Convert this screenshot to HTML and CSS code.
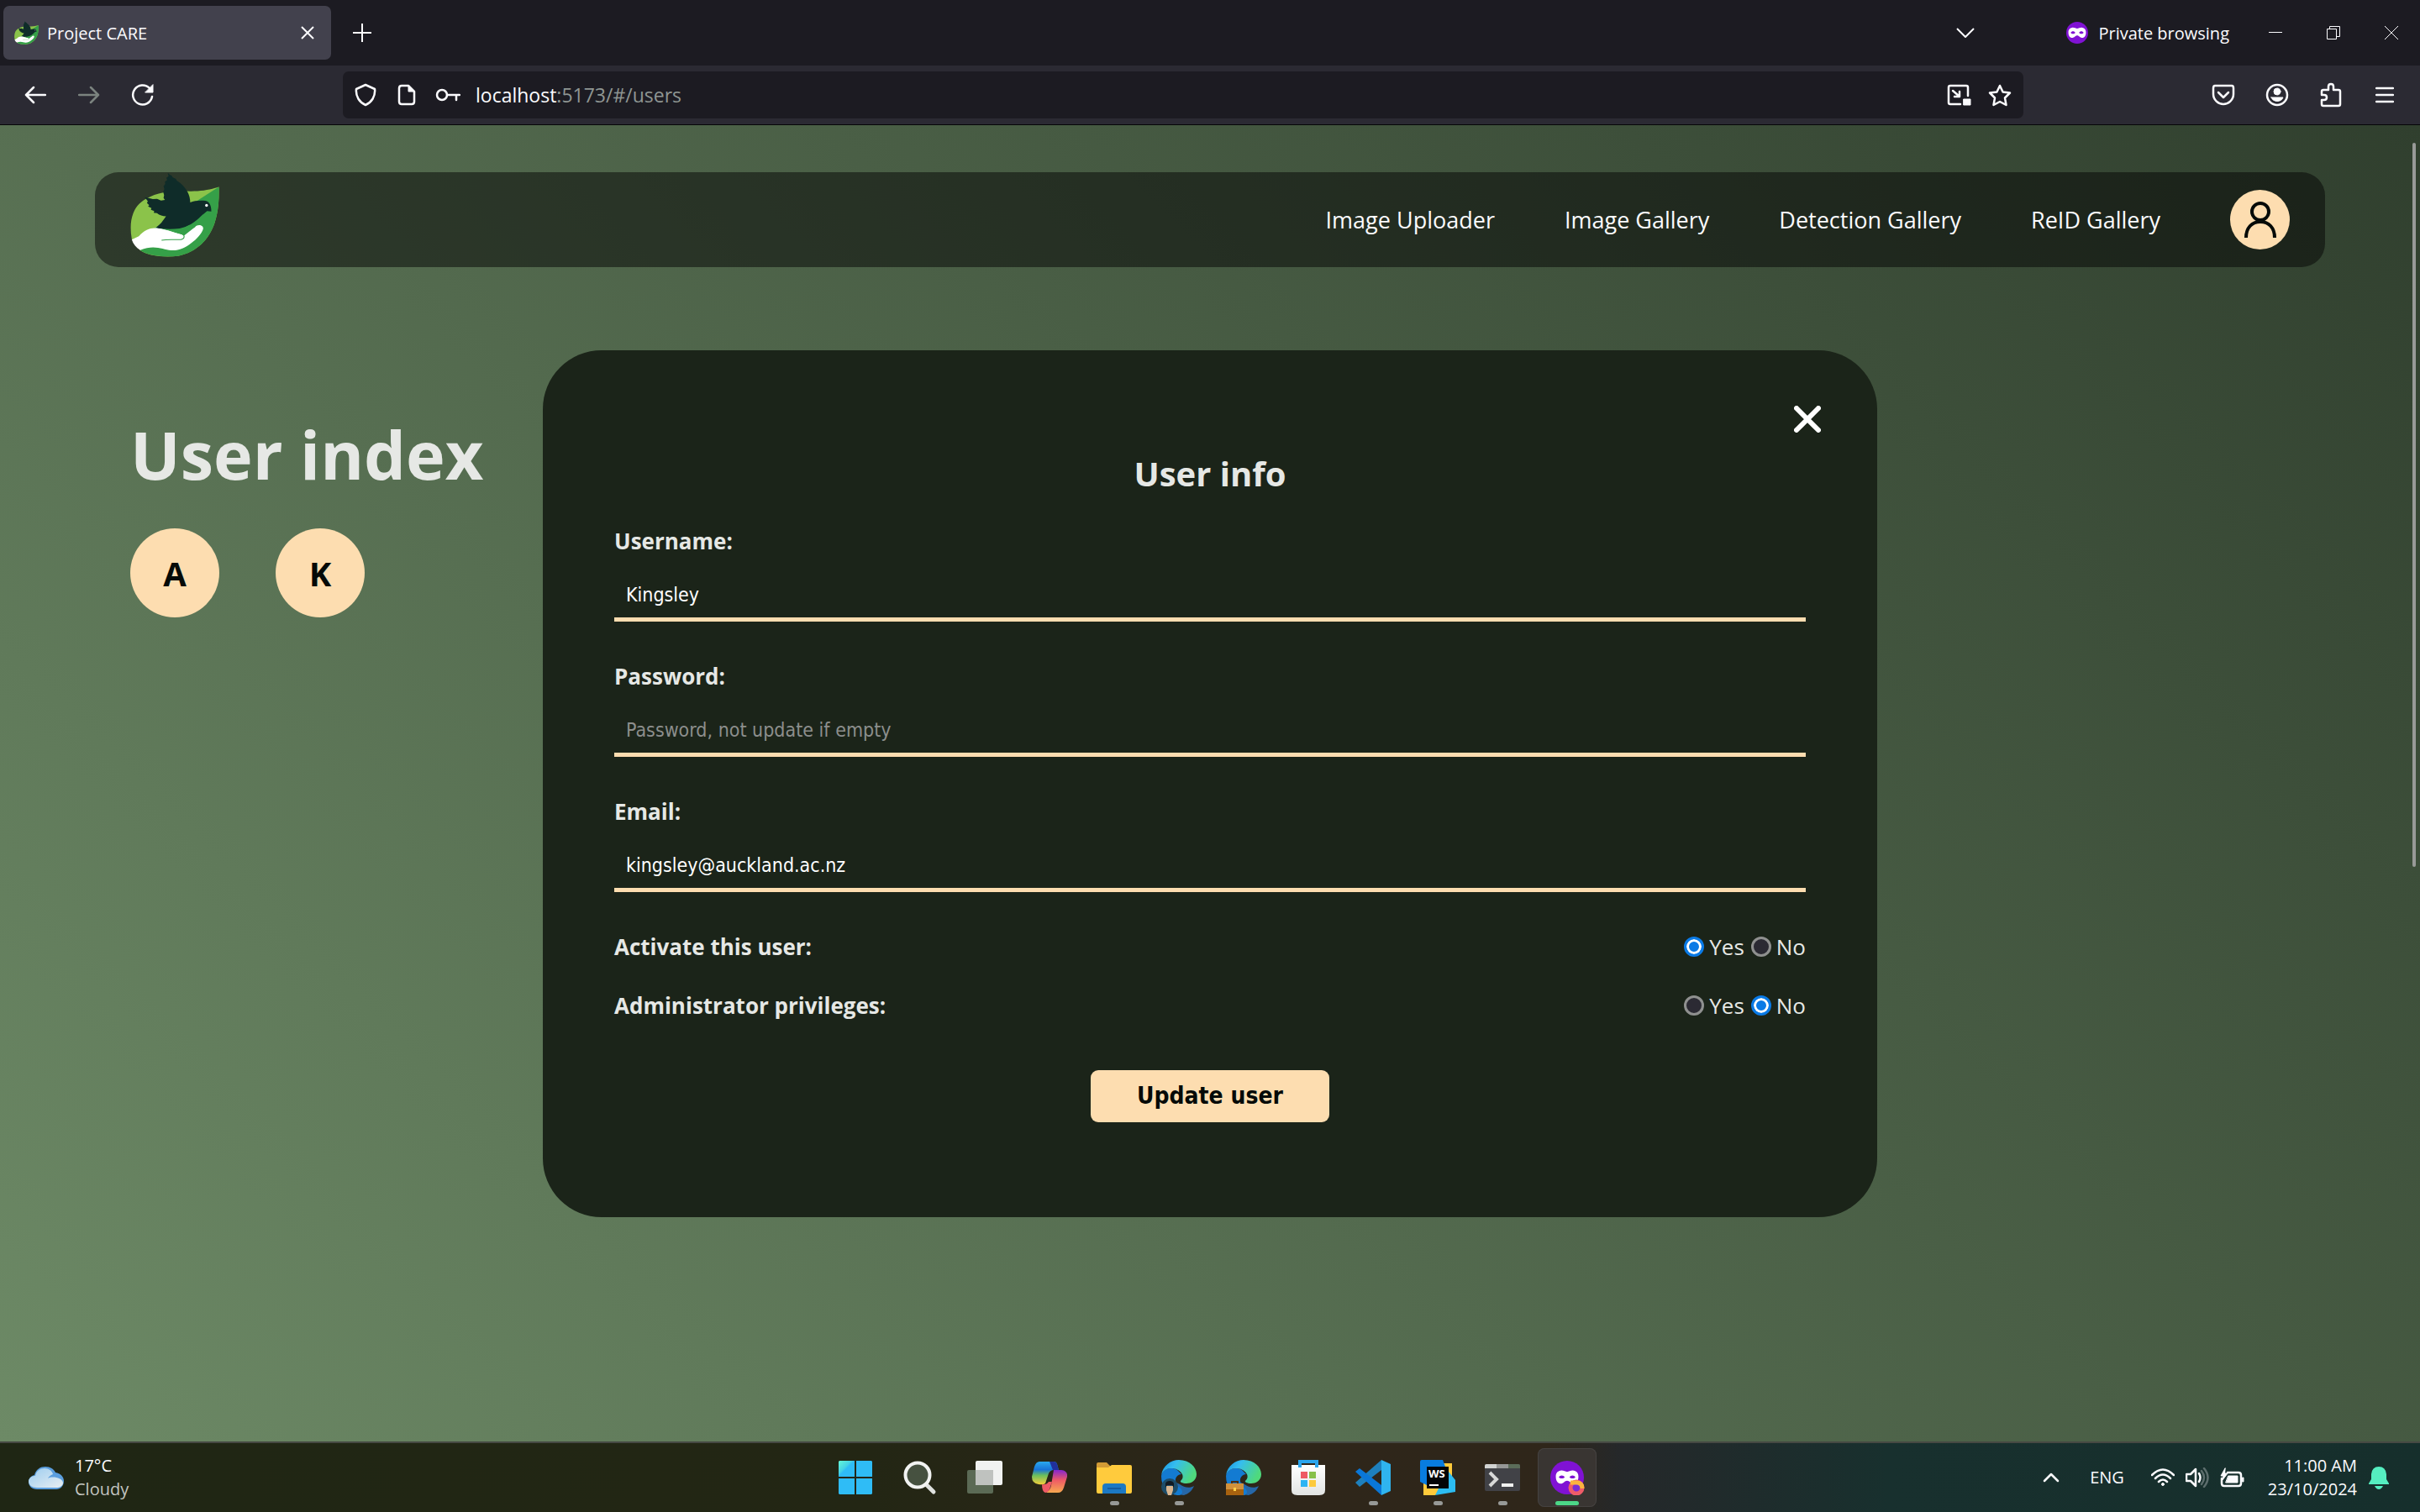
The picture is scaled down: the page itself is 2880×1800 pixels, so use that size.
FILE: index.html
```html
<!DOCTYPE html>
<html lang="en">
<head>
<meta charset="utf-8">
<meta name="viewport" content="width=device-width, initial-scale=1">
<title>Project CARE</title>
<link rel="stylesheet" href="styles.css">
</head>
<body>
<svg class="defs" aria-hidden="true">
  <defs>
    <symbol id="care-logo" viewBox="45 30 316 302">
      <path fill="#8bc34a" d="M50 268C38 200 55 150 100 125 150 97 200 96 260 98 300 98 330 92 360 82 361 130 358 170 345 210 325 270 280 315 215 328 160 335 100 325 80 308Z"/>
      <path fill="#35a048" d="M360 82 130 230 80 308C110 328 160 333 215 328 280 315 325 270 345 210 358 170 361 130 360 82Z"/>
      <path fill="#0f2c29" d="M178 32 186 40 192 42 195 48 207 54 210 60 222 68C245 88 258 110 258 138 272 131 295 130 312 132 326 135 333 148 333 170L318 168C310 176 302 180 295 188 275 208 250 226 220 230 190 234 160 232 135 229L155 210 172 187C160 186 148 184 140 176L128 174 130 168 118 164 120 158 108 152 112 147 104 140 107 133 96 119 110 122 125 126 140 125 154 131 168 129 163 122 165 112 162 100 166 90 163 80 169 72 168 64 176 58 173 50 181 44Z"/>
      <circle cx="316" cy="148" r="5" fill="#fff"/>
      <path fill="#fff" d="M50 270 75 258C95 236 115 228 135 229 165 232 200 245 228 252L275 225C285 214 306 218 304 232 300 248 280 270 262 282 240 300 215 310 190 308 160 305 130 286 80 307 65 298 55 285 50 270Z"/>
      <path fill="#35a048" d="M236 256 276 224 255 218 205 244Z"/>
      <path fill="#fff" d="M135 229C165 232 200 245 228 252 240 257 240 266 230 271L160 280Z"/>
      <path fill="none" stroke="#35a048" stroke-width="3" d="M156 272C180 268 205 271 225 270 238 268 240 256 230 251"/>
    </symbol>
    <symbol id="mask" viewBox="0 0 40 24">
      <path fill="#fff" fill-rule="evenodd" d="M9 1C13 0 17 3 20 3S27 0 31 1C37 2 39 6 39 11 39 18 36 23 31 23 26 23 24 18 20 18S14 23 9 23C4 23 1 18 1 11 1 6 3 2 9 1ZM6 12C8 15 14 15 16 12 14 8 8 8 6 12ZM24 12C26 15 32 15 34 12 32 8 26 8 24 12Z"/>
    </symbol>
    <linearGradient id="edge-top" x1="0" y1="0" x2="1" y2=".4"><stop offset="0" stop-color="#1690e0"/><stop offset=".4" stop-color="#35bdf0"/><stop offset="1" stop-color="#4fd97c"/></linearGradient>
    <linearGradient id="copilot-a" x1="0" y1="0" x2="0" y2="1"><stop offset="0" stop-color="#2aa9ee"/><stop offset=".35" stop-color="#1873d8"/><stop offset=".6" stop-color="#6bbf5c"/><stop offset="1" stop-color="#f6cf3b"/></linearGradient>
    <linearGradient id="copilot-b" x1="0" y1="0" x2="0" y2="1"><stop offset="0" stop-color="#8425cf"/><stop offset=".45" stop-color="#ee5b66"/><stop offset="1" stop-color="#f7a950"/></linearGradient>
    <linearGradient id="store-bag" x1="0" y1="0" x2="0" y2="1"><stop offset="0" stop-color="#fff"/><stop offset="1" stop-color="#e2e4e3"/></linearGradient>
    <linearGradient id="win" x1="0" y1="0" x2="1" y2="1"><stop offset="0" stop-color="#64f7d6"/><stop offset=".4" stop-color="#45d3e6"/><stop offset=".5" stop-color="#2fbcf6"/></linearGradient>
    <linearGradient id="cloud-fill" x1="0" y1="0" x2="1" y2="1"><stop offset="0" stop-color="#9ccdf0"/><stop offset="1" stop-color="#e8eef2"/></linearGradient>
    <symbol id="edge" viewBox="0 0 42 42">
      <path fill="#2667a8" d="M8 22C8 34 18 42 27 42 33 40 37 36 39 31 34 34 27 33 22 29Z"/>
      <path fill="#137bd2" d="M0 19C2 10 12 8 19 12L24 17C16 18 14 27 22 33 28 38 24 43 19 42 8 41 0 33 0 19Z"/>
      <path fill="url(#edge-top)" d="M0 18C2 7 11 0 21 0 34 0 42 9 42 17 42 25 35 28 30 28 25 28 22 26 23 25 30 19 22 10 12 10 6 10 2 13 0 18Z"/>
    </symbol>
  </defs>
</svg>

<header class="browser">
  <div class="tabstrip">
    <div class="tab">
      <svg class="favicon"><use href="#care-logo"/></svg>
      <span class="tab-title">Project CARE</span>
      <button class="bare" aria-label="Close tab"><svg width="16" height="16" viewBox="0 0 16 16" class="line"><path d="M1 1 15 15M15 1 1 15"/></svg></button>
    </div>
    <button class="bare new-tab" aria-label="New tab"><svg width="22" height="22" viewBox="0 0 22 22" class="line"><path d="M11 0V22M0 11H22"/></svg></button>
    <button class="bare tab-list" aria-label="List all tabs"><svg width="24" height="14" viewBox="0 0 24 14" class="line"><path d="M2 2 12 12 22 2"/></svg></button>
    <div class="private">
      <svg width="26" height="26" viewBox="0 0 26 26"><circle cx="13" cy="13" r="13" fill="#8012d4"/><use href="#mask" x="2" y="6" width="22" height="14"/></svg>
      <span>Private browsing</span>
    </div>
    <div class="window-buttons">
      <button class="bare" aria-label="Minimise"><svg width="16" height="16" viewBox="0 0 16 16" class="line hair"><path d="M0 7.500H16"/></svg></button>
      <button class="bare" aria-label="Restore"><svg width="16" height="16" viewBox="0 0 16 16" class="line hair"><path d="M.5 3.500H11.500V15.500H.5ZM3.500 3.500V.5H15.500V12.500H11.500"/></svg></button>
      <button class="bare" aria-label="Close window"><svg width="18" height="18" viewBox="0 0 18 18" class="line hair"><path d="M1 1 17 17M17 1 1 17"/></svg></button>
    </div>
  </div>
  <div class="toolbar">
    <button class="bare tool" aria-label="Back"><svg width="26" height="22" viewBox="0 0 26 22" class="line bold"><path d="M25 11H2M11 2 2 11 11 20"/></svg></button>
    <button class="bare tool dim" aria-label="Forward"><svg width="26" height="22" viewBox="0 0 26 22" class="line bold"><path d="M1 11H24M15 2 24 11 15 20"/></svg></button>
    <button class="bare tool" aria-label="Reload"><svg width="28" height="28" viewBox="0 0 28 28" class="line bold"><path d="M25 16A11.500 11.500 0 1 1 22 6L24 8"/><path class="solid" d="M26 2V11H17Z"/></svg></button>
    <div class="urlbar">
      <svg width="26" height="28" viewBox="0 0 26 28" class="line bold"><path d="M13 2 24 7C25 16 20 23 13 26 6 23 1 16 2 7Z"/></svg>
      <svg width="22" height="26" viewBox="0 0 22 26" class="line bold"><path d="M5 2H13L20 9V21Q20 24 17 24H5Q2 24 2 21V5Q2 2 5 2Z"/><path class="solid" d="M13 2V9H20Z"/></svg>
      <svg width="30" height="16" viewBox="0 0 30 16" class="line bold"><circle cx="8" cy="8" r="6"/><path d="M14 8H29M25 8V14"/></svg>
      <div class="url" role="textbox" aria-label="Address"><b>localhost</b>:5173/#/users</div>
      <svg width="29" height="26" viewBox="0 0 29 26" class="line bold"><path d="M16 24H4Q2 24 2 22V4Q2 2 4 2H23Q25 2 25 4V14M7 8 14 14M15 9V15H9"/><path class="solid" d="M20 18H28V25H20Z"/></svg>
      <svg width="28" height="27" viewBox="0 0 28 27" class="line bold"><path d="M14 2 17.600 9.500 26 10.500 20 16.500 21.500 25 14 21 6.500 25 8 16.500 2 10.500 10.400 9.500Z"/></svg>
    </div>
    <button class="bare tool" aria-label="Save to Pocket"><svg width="28" height="26" viewBox="0 0 28 26" class="line bold"><path d="M4 2H24Q26 2 26 5V12C26 19 20 24 14 24S2 19 2 12V5Q2 2 4 2ZM8 10 14 16 20 10"/></svg></button>
    <button class="bare tool" aria-label="Account"><svg width="28" height="28" viewBox="0 0 28 28" class="line bold"><circle cx="14" cy="14" r="12"/><circle class="solid" cx="14" cy="10" r="4"/><path class="solid" d="M7 17H21C19 23 9 23 7 17Z"/></svg></button>
    <button class="bare tool" aria-label="Extensions"><svg width="26" height="30" viewBox="0 0 26 30" class="line bold"><path d="M2 15V11Q2 9 4 9H10V5Q10 2 13 2T16 5V9H22Q24 9 24 11V26Q24 28 22 28H4Q2 28 2 26V21H5Q8 21 8 18T5 15Z"/></svg></button>
    <button class="bare tool" aria-label="Menu"><svg width="22" height="20" viewBox="0 0 22 20" class="line bold"><path d="M1 2H21M1 10H21M1 18H21"/></svg></button>
  </div>
</header>

<div class="page">
  <nav class="nav">
    <a class="logo" href="#/" aria-label="Project CARE"><svg width="106" height="101"><use href="#care-logo"/></svg></a>
    <a href="#/uploader">Image Uploader</a>
    <a href="#/gallery">Image Gallery</a>
    <a href="#/detection">Detection Gallery</a>
    <a href="#/reid">ReID Gallery</a>
    <a class="profile" href="#/profile" aria-label="Profile"><svg width="40" height="44" viewBox="0 0 40 44" fill="none" stroke="#050a08" stroke-width="4"><circle cx="20" cy="12" r="10"/><path d="M3 43C3 31 10 24 20 24S37 31 37 43"/></svg></a>
  </nav>
  <main class="users">
    <h1>User index</h1>
    <div class="avatars">
      <button class="avatar">A</button>
      <button class="avatar">K</button>
    </div>
  </main>
  <div class="overlay">
    <form class="modal" role="dialog" aria-labelledby="modal-title">
      <div class="modal-top"><button type="button" class="bare close" aria-label="Close"><svg width="32" height="32" viewBox="0 0 32 32"><path d="M3 3 29 29M29 3 3 29" stroke="#fff" stroke-width="6" stroke-linecap="round"/></svg></button></div>
      <h2 id="modal-title">User info</h2>
      <div class="fields">
        <div class="field"><label for="username">Username:</label><input id="username" type="text" value="Kingsley"></div>
        <div class="field"><label for="password">Password:</label><input id="password" type="password" placeholder="Password, not update if empty"></div>
        <div class="field"><label for="email">Email:</label><input id="email" type="email" value="kingsley@auckland.ac.nz"></div>
        <div class="choices">
          <div class="choice" role="radiogroup" aria-labelledby="activate"><span class="legend" id="activate">Activate this user:</span>
            <label class="option"><input type="radio" name="active" checked>Yes</label>
            <label class="option"><input type="radio" name="active">No</label></div>
          <div class="choice" role="radiogroup" aria-labelledby="admin"><span class="legend" id="admin">Administrator privileges:</span>
            <label class="option"><input type="radio" name="admin">Yes</label>
            <label class="option"><input type="radio" name="admin" checked>No</label></div>
        </div>
      </div>
      <button type="submit" class="submit">Update user</button>
    </form>
  </div>
  <div class="scroll-thumb"></div>
</div>

<footer class="taskbar">
  <div class="weather">
    <svg width="42" height="27" viewBox="0 0 42 27"><path fill="#5b9ede" d="M10 27C4 27 0 23 0 18 0 14 3 11 7 10 9 3 14 0 20 0 26 0 30 3 32 7 38 8 42 12 42 17 42 23 38 27 33 27Z"/><path fill="url(#cloud-fill)" d="M10 25C4 25 0 22 0 17 1 13 4 11 8 11 9 5 14 2 19 2 24 2 28 5 29 9 26 10 24 12 23 14 28 11 40 13 41 19 41 23 37 25 33 25Z"/></svg>
    <div class="stack"><span>17°C</span><span class="muted">Cloudy</span></div>
  </div>
  <div class="apps">
    <button class="app" aria-label="Start"><svg width="42" height="42" viewBox="0 0 42 42"><path fill="url(#win)" d="M2 1H20V20H1V2Z"/><path fill="#2fbcf6" d="M22 1H40L41 2V20H22ZM1 22H20V41H2L1 40ZM22 22H41V40L40 41H22Z"/></svg></button>
    <button class="app" aria-label="Search"><svg width="42" height="42" viewBox="0 0 42 42"><path d="M28 29 37 38" stroke="#dfe1df" stroke-width="5" stroke-linecap="round"/><circle cx="18" cy="18" r="14.500" fill="#465140" stroke="#f2f3f2" stroke-width="4"/></svg></button>
    <button class="app" aria-label="Task view"><svg width="42" height="42" viewBox="0 0 42 42"><rect x="0" y="12" width="31" height="28" rx="2" fill="#5b6a55"/><rect x="10" y="1" width="32" height="29" rx="2" fill="#f1f2f1"/><path fill="#bfc2bf" d="M10 12H31V30H10Z"/></svg></button>
    <button class="app" aria-label="Copilot"><svg width="42" height="42" viewBox="0 0 42 42"><path fill="url(#copilot-a)" d="M9 2H26Q29 2 30 5L32 12H26Q22 12 20 16L16 28Q14 30 8 29 0 28 0 20L3 8Q5 2 9 2Z"/><path fill="#20309c" d="M21 2H26Q29 2 30 5L32 12H25Z"/><path fill="url(#copilot-b)" d="M26 12H35Q43 13 42 20L38 33Q36 39 31 39H17Q22 36 23 30Z"/><path fill="#ee5b66" d="M12 29Q17 30 20 26L24 26 21 35Q19 39 16 39 12 38 12 29Z"/></svg></button>
    <button class="app running" aria-label="File Explorer"><svg width="42" height="42" viewBox="0 0 42 42"><path fill="#d29b35" d="M0 5Q0 3 2 3H12L17 8H28V14H0Z"/><path fill="#ffcb3d" d="M0 9H14L18 6H40Q42 6 42 8V38Q42 40 40 40H2Q0 40 0 38Z"/><path fill="#1c79c4" d="M7 40V32Q7 28 11 28H31Q35 28 35 32V40Z"/><path fill="#155c9f" d="M13 33H29V35H13Z"/></svg></button>
    <button class="app running" aria-label="Edge, personal"><svg width="42" height="42" viewBox="0 0 42 42"><use href="#edge" width="42" height="42"/><circle cx="10" cy="32" r="10" fill="#1d4c68"/><path fill="#d9b690" d="M6 31H14V36L12 42H8L6 36Z"/><path fill="#111a22" d="M5 33V28Q6 25 10 25T15 28V33L13 30H7Z"/></svg></button>
    <button class="app" aria-label="Edge, work"><svg width="42" height="42" viewBox="0 0 42 42"><use href="#edge" width="42" height="42"/><path fill="none" stroke="#4d2d12" stroke-width="2" d="M7 28V26H14V28"/><path fill="#d0913c" d="M0 28H21V35H0Z"/><path fill="#a8620f" d="M0 35H21V42H0Z"/><path fill="#ffd04a" d="M9 33H12V37H9Z"/></svg></button>
    <button class="app" aria-label="Microsoft Store"><svg width="42" height="42" viewBox="0 0 42 42"><path fill="url(#store-bag)" d="M1 6H41V36Q41 42 34 42H8Q1 42 1 36Z"/><path fill="none" stroke="#2aa5ee" stroke-width="4" d="M11 9V2H31V9"/><path fill="#ee5a64" d="M12 14H20V22H12Z"/><path fill="#88c14a" d="M22 14H30V22H22Z"/><path fill="#2db4f3" d="M12 24H20V32H12Z"/><path fill="#fdca3c" d="M22 24H30V32H22Z"/></svg></button>
    <button class="app running" aria-label="Visual Studio Code"><svg width="42" height="42" viewBox="0 0 42 42"><path fill="#1e80bd" d="M31 0V12L5 32 0 27Z"/><path fill="#0a77d8" d="M0 14 5 10 31 30V42Z"/><path fill="#2fb4ef" d="M31 0 42 5V37L31 42Z"/></svg></button>
    <button class="app running" aria-label="WebStorm"><svg width="42" height="42" viewBox="0 0 42 42"><path fill="#ffca3b" d="M28 4H38V20L18 42H4V28Z"/><path fill="#087cdf" d="M0 2Q0 0 2 0H27L30 8 8 30 0 26Z"/><path fill="#2cbcf2" d="M34 14 42 24V38Q30 40 18 42L24 30Z"/><path fill="#030507" d="M8 8H34V34H8Z"/><text x="10" y="21" class="ws">WS</text><path fill="#fff" d="M11 29H22V31H11Z"/></svg></button>
    <button class="app running" aria-label="Terminal"><svg width="42" height="42" viewBox="0 0 42 42"><rect y="5" width="42" height="32" rx="2" fill="#414247"/><path fill="#d2d3d2" d="M0 7Q0 5 2 5H14V10H0Z"/><path fill="#969796" d="M14 5H28V10H14Z"/><path fill="#5b6c59" d="M28 5H40Q42 5 42 7V10H28Z"/><path fill="none" stroke="#d8d9d8" stroke-width="4" d="M6 15 14 23 6 31"/><path fill="#f0f1f0" d="M20 28H34V32H20Z"/></svg></button>
    <button class="app running active" aria-label="Firefox private browsing"><svg width="42" height="42" viewBox="0 0 42 42"><circle cx="21" cy="21" r="20" fill="#8012d4"/><use href="#mask" x="6" y="12" width="30" height="17"/><circle cx="32" cy="33" r="7" fill="#7a2bd6" stroke="#ef5c68" stroke-width="5"/><path fill="none" stroke="#fbb33f" stroke-width="5" d="M25 27H32Q39 27 39 34"/></svg></button>
  </div>
  <div class="tray">
    <svg width="20" height="12" viewBox="0 0 20 12" class="line bold"><path d="M2 10 10 2 18 10"/></svg>
    <span class="lang">ENG</span>
    <div class="status">
      <svg width="28" height="22" viewBox="0 0 28 22" class="line bold"><path d="M1 8Q14 -5 27 8M5 12Q14 3 23 12M9 16Q14 11 19 16"/><circle class="solid" cx="14" cy="19" r="1.500"/></svg>
      <svg width="28" height="24" viewBox="0 0 28 24" class="line bold"><path d="M1 8H6L12 2V22L6 16H1ZM16 7Q19 12 16 17"/><path class="faint" d="M19 4Q25 12 19 20M22 1Q31 12 22 23"/></svg>
      <svg width="30" height="24" viewBox="0 0 30 24" class="line bold"><path d="M9 6H22Q25 6 25 9V19Q25 22 22 22H5Q2 22 2 19V13"/><path class="solid" d="M10 10H21V18H7ZM27 12H28V17H27ZM6 1 1 10H4L3 15 9 7H6Z"/></svg>
    </div>
    <div class="stack clock"><span>11:00 AM</span><span>23/10/2024</span></div>
    <svg width="24" height="28" viewBox="0 0 24 28"><path fill="#55eec0" d="M0 21 3 16V10Q4 1 12 1T21 10V16L24 21V22H0ZM7 24H17Q15 28 12 28T7 24Z"/></svg>
  </div>
</footer>
</body>
</html>
```
FILE: styles.css
```css
:root {
  --peach: #fdddb0;
  --panel: #1b2419;
  --text: #e6e8e5;
}

* { box-sizing: border-box; }

body {
  margin: 0;
  min-height: 100vh;
  display: flex;
  flex-direction: column;
  font-family: "Segoe UI", "Open Sans", sans-serif;
  color: #fbfbfe;
}

h1, h2 { margin: 0; }
a { color: inherit; text-decoration: none; }
svg { display: block; flex: none; }
.defs { position: absolute; width: 0; height: 0; }

.bare {
  display: flex;
  align-items: center;
  justify-content: center;
  padding: 0;
  border: 0;
  background: none;
  color: inherit;
}

.line { fill: none; stroke: currentColor; stroke-width: 2; stroke-linejoin: round; }
.line.bold { stroke-width: 2.5; stroke-linecap: round; }
.line.hair { stroke-width: 1; stroke-linejoin: miter; }
.line .solid { fill: currentColor; stroke-width: 1; }
.line .faint { opacity: .3; }

/* Browser chrome */
.browser { border-bottom: 1px solid #050507; font-size: 20px; }

.tabstrip {
  display: flex;
  align-items: center;
  height: 78px;
  padding-left: 4px;
  background: #1c1b22;
}

.tab {
  display: flex;
  align-items: center;
  gap: 10px;
  width: 390px;
  height: 64px;
  padding: 0 20px 0 13px;
  border-radius: 7px;
  background: #42414d;
}

.favicon { width: 29px; height: 28px; }
.tab-title { flex: 1; }
.new-tab { margin-left: 26px; }
.tab-list { margin-left: auto; }
.private { display: flex; align-items: center; gap: 12px; margin: 0 20px 0 108px; }
.window-buttons { display: flex; }
.window-buttons .bare { width: 69px; height: 70px; }

.toolbar {
  display: flex;
  align-items: center;
  height: 70px;
  padding: 0 10px;
  background: #2b2a33;
}

.tool { width: 64px; height: 56px; }
.dim { color: #7b837f; }

.urlbar {
  flex: 1;
  display: flex;
  align-items: center;
  gap: 20px;
  height: 56px;
  margin: 0 206px;
  padding: 0 14px;
  border-radius: 7px;
  background: #1c1b22;
}

.urlbar svg:first-child { margin-right: 5px; }
.urlbar svg:nth-child(2) { margin-right: 3px; }
.url { flex: 1; margin-left: -2px; font-size: 23px; color: #8f9693; }
.url b { font-weight: 400; color: #fbfbfe; }

/* Page */
.page {
  position: relative;
  flex: 1;
  padding-top: 56px;
  background: linear-gradient(45deg, #6d8a66, #303f2e);
}

.nav {
  display: flex;
  align-items: center;
  gap: 83px;
  height: 113px;
  margin: 0 113px;
  padding: 0 42px;
  border-radius: 28px;
  background: rgba(4, 4, 4, .5);
  font-size: 27px;
}

.logo { align-self: flex-start; margin-right: auto; }

.profile {
  display: grid;
  place-items: center;
  width: 71px;
  height: 71px;
  border-radius: 50%;
  background: var(--peach);
}

.users { padding: 168px 155px 0; color: var(--text); }
.users h1 { font-size: 79px; line-height: 110px; }
.avatars { display: flex; gap: 67px; margin-top: 33px; }

.avatar {
  width: 106px;
  height: 106px;
  padding: 0;
  border: 0;
  border-radius: 50%;
  background: var(--peach);
  color: #050a08;
  font: 700 40px "Segoe UI", "Open Sans", sans-serif;
}

.scroll-thumb {
  position: absolute;
  top: 21px;
  right: 5px;
  width: 4px;
  height: 55%;
  border-radius: 2px;
  background: #989a98;
}

/* User dialog */
.overlay {
  position: absolute;
  inset: 0;
  display: flex;
  align-items: center;
  justify-content: center;
}

.modal {
  width: 90%;
  max-width: 1588px;
  padding: 58px 85px 113px;
  border-radius: 70px;
  background: var(--panel);
  color: var(--text);
  font-size: 26px;
  line-height: 38px;
}

.modal-top { display: flex; justify-content: flex-end; margin-right: -26px; }
.close { width: 48px; height: 48px; }
.modal h2 { margin: 13px 0 33px; font-size: 40px; line-height: 56px; text-align: center; }
.fields { display: flex; flex-direction: column; gap: 46px; }
.field { display: flex; flex-direction: column; gap: 18px; font-weight: 700; }

.field input {
  height: 59px;
  padding: 0 14px;
  border: 0;
  border-bottom: 5px solid var(--peach);
  background: none;
  color: #fff;
  font: 23px Tahoma, "DejaVu Sans Condensed", sans-serif;
  outline: 0;
}

.field input::placeholder { color: #8c8e8c; opacity: 1; }
.choices { display: flex; flex-direction: column; gap: 32px; }
.choice { display: flex; align-items: center; gap: 8px; }
.legend { flex: 1; font-weight: 700; }
.option { display: flex; align-items: center; gap: 6px; }

.option input {
  appearance: none;
  width: 24px;
  height: 24px;
  margin: 0;
  border: 3px solid #8f908f;
  border-radius: 50%;
  background: #2b2a33;
}

.option input:checked {
  border-color: #0a7ae6;
  background: #0a7ae6;
  box-shadow: inset 0 0 0 3px #fff;
}

.submit {
  display: block;
  height: 62px;
  margin: 58px auto 0;
  padding: 0 55px;
  border: 0;
  border-radius: 9px;
  background: var(--peach);
  color: #050a08;
  font: 700 28px Tahoma, "DejaVu Sans Condensed", sans-serif;
}

/* Taskbar */
.taskbar {
  display: grid;
  grid-template-columns: 1fr auto 1fr;
  align-items: center;
  height: 84px;
  padding-left: 2px;
  border-top: 2px solid #464943;
  background: linear-gradient(90deg, #1f2614, #232614 36%, #2e261a 52%, #2f261a 64%, #25282a 67%, #18302e 78%, #162f2c);
  font-size: 20px;
  line-height: 28px;
}

.weather { display: flex; align-items: center; gap: 13px; padding: 0 32px; }
.stack { display: flex; flex-direction: column; }
.muted { color: #c3c5c1; }
.apps { display: flex; gap: 7px; }

.app {
  position: relative;
  display: grid;
  place-items: center;
  width: 70px;
  height: 70px;
  padding: 0;
  border: 0;
  border-radius: 8px;
  background: none;
}

.app.running::after {
  content: "";
  position: absolute;
  bottom: 2px;
  left: 50%;
  width: 11px;
  height: 5px;
  margin-left: -5px;
  border-radius: 3px;
  background: #979997;
}

.app.active { background: #393532; box-shadow: inset 0 0 0 1px #454240; }
.app.active::after { width: 28px; margin-left: -14px; background: #4cd787; }
.ws { fill: #fff; font: 700 13px "Open Sans", sans-serif; }

.tray { display: flex; align-items: center; justify-content: flex-end; padding-right: 37px; }
.lang { margin: 0 32px 0 36px; }
.status { display: flex; align-items: center; gap: 13px; }
.clock { margin: 0 14px 0 27px; text-align: right; white-space: nowrap; }
```
